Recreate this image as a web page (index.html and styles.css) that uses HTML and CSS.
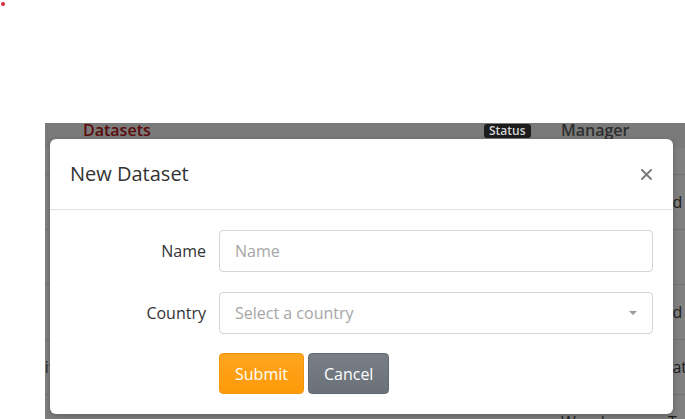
FILE: index.html
```html
<!DOCTYPE html>
<html>
<head>
<meta charset="utf-8">
<link rel="stylesheet" href="styles.css">
</head>
<body>
<div class="dot"></div>
<div class="stage">
  <div class="table">
    <div class="row head">
      <div class="cell"></div>
      <div class="cell title-cell">Datasets</div>
      <div class="cell"><span class="badge">Status</span></div>
      <div class="cell mgr">Manager</div>
      <div class="cell"></div>
    </div>
    <div class="row thin"></div>
    <div class="row"><div class="cell"></div><div class="cell"></div><div class="cell"></div><div class="cell"></div><div class="cell">Id</div></div>
    <div class="row"><div class="cell"></div><div class="cell"></div><div class="cell"></div><div class="cell"></div><div class="cell"></div></div>
    <div class="row"><div class="cell"></div><div class="cell"></div><div class="cell"></div><div class="cell"></div><div class="cell">Id</div></div>
    <div class="row"><div class="cell edit">Edit</div><div class="cell"></div><div class="cell"></div><div class="cell"></div><div class="cell">Iat</div></div>
    <div class="row"><div class="cell"></div><div class="cell"></div><div class="cell"></div><div class="cell">Wood</div><div class="cell">T</div></div>
  </div>

  <div class="modal">
    <div class="modal-header">
      <h4 class="modal-title">New Dataset</h4>
      <button class="close" aria-label="Close">
        <svg width="11" height="11" viewBox="0 0 11 11"><path d="M1 1L10 10M10 1L1 10" stroke="#7b7b7b" stroke-width="1.9" stroke-linecap="round"/></svg>
      </button>
    </div>
    <div class="modal-body">
      <div class="form">
        <label class="label">Name</label>
        <div class="input"><span class="ph">Name</span></div>
        <label class="label">Country</label>
        <div class="input select"><span class="ph">Select a country</span><span class="caret"></span></div>
        <div></div>
        <div class="actions">
          <button class="btn btn-submit">Submit</button>
          <button class="btn btn-cancel">Cancel</button>
        </div>
      </div>
    </div>
  </div>
</div>
</body>
</html>
```

FILE: styles.css
```css
html, body {
  margin: 0;
  padding: 0;
  background: #ffffff;
  font-family: "Open Sans", "Noto Sans", sans-serif;
}

.dot {
  width: 4px;
  height: 4px;
  margin: 2px 0 0 1px;
  border-radius: 50%;
  background: #d42a3a;
}

.stage {
  position: relative;
  margin: 117px 0 0 45px;
  width: 640px;
  height: 296px;
  overflow: hidden;
  background: #808080;
}

.table {
  display: flex;
  flex-direction: column;
}

.row {
  display: grid;
  grid-template-columns: 38px 401px 77px 107px 1fr;
  height: 55px;
  align-items: center;
  border-bottom: 1px solid #727272;
  box-sizing: border-box;
  font-size: 16px;
  color: #1e1e1e;
}

.row.head {
  height: 25px;
  align-items: start;
  background: #7a7a7a;
  border-bottom: none;
  line-height: 14px;
}

.row.thin {
  height: 27px;
}

.cell {
  white-space: nowrap;
}

.title-cell {
  font-weight: 600;
  color: #5a0b0b;
}

.badge {
  display: inline-block;
  margin-top: 1px;
  padding: 0 5px;
  height: 14px;
  line-height: 14px;
  border-radius: 3px;
  background: #1c1c1c;
  color: #d6d6d6;
  font-size: 12px;
  font-weight: 600;
  vertical-align: top;
}

.mgr {
  font-weight: 600;
  color: #2e2e2e;
  font-size: 16px;
}

.edit {
  text-indent: -19px;
  color: #2a2a2a;
}

.modal {
  position: absolute;
  left: 5px;
  top: 16px;
  width: 623px;
  background: #ffffff;
  border-radius: 6px;
  box-shadow: 0 2px 6px rgba(0, 0, 0, 0.25);
}

.modal-header {
  display: flex;
  align-items: center;
  justify-content: space-between;
  padding: 20px 20px 20px 20px;
  border-bottom: 1px solid #e1e1e1;
}

.modal-title {
  margin: 0;
  font-size: 20px;
  font-weight: 400;
  line-height: 30px;
  color: #333333;
}

.close {
  border: 0;
  background: transparent;
  padding: 0;
  margin-right: 1px;
  width: 12px;
  height: 12px;
  display: flex;
  align-items: center;
  justify-content: center;
}

.modal-body {
  padding: 20px;
}

.form {
  display: grid;
  grid-template-columns: 136px 1fr;
  column-gap: 13px;
  row-gap: 20px;
  align-items: center;
}

.label {
  text-align: right;
  font-size: 16px;
  color: #333333;
}

.input {
  height: 42px;
  box-sizing: border-box;
  border: 1px solid #d5d5d5;
  border-radius: 4px;
  padding: 0 15px;
  display: flex;
  align-items: center;
  font-size: 16px;
}

.ph {
  color: #a6a6a6;
}

.select {
  justify-content: space-between;
}

.caret {
  width: 0;
  height: 0;
  border-left: 4px solid transparent;
  border-right: 4px solid transparent;
  border-top: 4px solid #9a9a9a;
}

.actions {
  display: flex;
  gap: 4px;
  margin-top: -1px;
}

.btn {
  height: 41px;
  padding: 0 15px;
  border-radius: 4px;
  font-family: "Open Sans", "Noto Sans", sans-serif;
  font-size: 16px;
  color: #ffffff;
  cursor: pointer;
}

.btn-submit {
  background: linear-gradient(#ffa520, #fd9a08);
  border: 1px solid #f3950c;
}

.btn-cancel {
  background: linear-gradient(#777e86, #6a7179);
  border: 1px solid #62686f;
}
```
